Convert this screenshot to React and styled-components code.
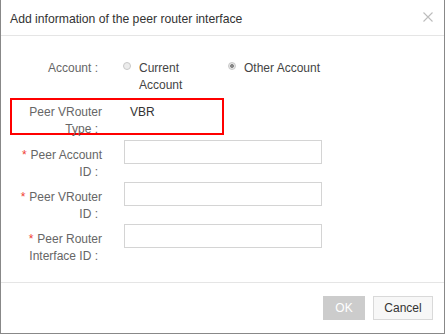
import React from "react";
import styled, { createGlobalStyle } from "styled-components";

const Global = createGlobalStyle`
  html, body { margin: 0; padding: 0; background: #fff; }
  body { font-family: "Liberation Sans", Arial, sans-serif; font-size: 12px; }
  * { box-sizing: border-box; }
`;

const Dialog = styled.div`
  width: 445px;
  height: 334px;
  border: 1px solid #888;
  border-top: none;
  display: flex;
  flex-direction: column;
  background: #fff;
`;

const Header = styled.div`
  height: 36px;
  border-bottom: 1px solid #e5e5e5;
  display: flex;
  align-items: center;
  justify-content: space-between;
  padding: 0 11px 0 9px;
`;

const Title = styled.div`
  font-size: 12.2px;
  color: #333;
  padding-top: 2px;
`;

const Close = styled.button`
  border: none;
  background: none;
  padding: 0;
  width: 10px;
  height: 10px;
  display: flex;
  margin-top: -2px;
  cursor: pointer;
`;

const Body = styled.div`
  flex: 1;
  display: flex;
  flex-direction: column;
  gap: 1px;
  padding-top: 24px;
`;

const Row = styled.div`
  display: grid;
  grid-template-columns: 88px 1fr;
  column-gap: 22px;
  align-items: start;
  padding-left: ${(p) => (p.$highlight ? 2 : 13)}px;
  ${(p) =>
    p.$highlight &&
    `
    width: 214px;
    height: 37px;
    margin: 3px 0 4px 9px;
    border: 2px solid #ff0000;
    padding-top: 4px;
  `}
`;

const Label = styled.div`
  text-align: right;
  color: #666;
  line-height: 17px;
  padding-top: ${(p) => p.$offset || 0}px;
`;

const LabelLine = styled.span`
  display: block;
  &:last-child::after {
    content: " :";
    padding-right: 4px;
  }
`;

const Required = styled.span`
  color: #f04134;
  margin-right: 4px;
`;

const RadioGroup = styled.div`
  display: flex;
  margin-left: -1px;
`;

const RadioOption = styled.label`
  display: flex;
  align-items: flex-start;
  gap: 8px;
  width: ${(p) => p.$width || "auto"};
  color: #444;
  line-height: 17px;
`;

const RadioDot = styled.span`
  flex: none;
  width: 8px;
  height: 8px;
  margin-top: 2px;
  border-radius: 50%;
  border: 1px solid #c8c8c8;
  background: ${(p) =>
    p.$checked
      ? "radial-gradient(circle, #888 0 1.6px, #e6e6e6 2.2px)"
      : "#ececec"};
`;

const RadioText = styled.span`
  max-width: ${(p) => p.$max || "none"};
`;

const Static = styled.div`
  color: #333;
  line-height: 17px;
  padding-left: 6px;
`;

const Input = styled.input`
  width: 198px;
  height: 24px;
  border: 1px solid #d4d4d4;
  background: #fff;
  outline: none;
  font: inherit;
`;

const Footer = styled.div`
  height: 51px;
  border-top: 1px solid #e5e5e5;
  display: flex;
  justify-content: flex-end;
  align-items: center;
  gap: 8px;
  padding-right: 11px;
`;

const Button = styled.button`
  height: 24px;
  width: ${(p) => p.$width}px;
  font-family: inherit;
  font-size: 12px;
  border: 1px solid ${(p) => (p.$primary ? "#ccc" : "#d9d9d9")};
  background: ${(p) => (p.$primary ? "#ccc" : "#f7f7f7")};
  color: ${(p) => (p.$primary ? "#fff" : "#333")};
  padding: 0;
  cursor: pointer;
`;

function FieldLabel({ lines, required, offset }) {
  return (
    <Label $offset={offset}>
      {lines.map((line, i) => (
        <LabelLine key={i}>
          {required && i === 0 && <Required>*</Required>}
          {line}
        </LabelLine>
      ))}
    </Label>
  );
}

const fields = [
  ["Peer Account", "ID"],
  ["Peer VRouter", "ID"],
  ["Peer Router", "Interface ID"],
];

export default function App() {
  return (
    <>
      <Global />
      <Dialog>
        <Header>
          <Title>Add information of the peer router interface</Title>
          <Close aria-label="close">
            <svg width="10" height="10" viewBox="0 0 10 10">
              <path d="M0.5 0.5L9.5 9.5M9.5 0.5L0.5 9.5" stroke="#bdbdbd" strokeWidth="1.1" />
            </svg>
          </Close>
        </Header>
        <Body>
          <Row>
            <FieldLabel lines={["Account"]} />
            <RadioGroup>
              <RadioOption $width="105px">
                <RadioDot />
                <RadioText $max="70px">Current Account</RadioText>
              </RadioOption>
              <RadioOption>
                <RadioDot $checked />
                <RadioText>Other Account</RadioText>
              </RadioOption>
            </RadioGroup>
          </Row>
          <Row $highlight>
            <FieldLabel lines={["Peer VRouter", "Type"]} />
            <Static>VBR</Static>
          </Row>
          {fields.map((lines) => (
            <Row key={lines.join(" ")}>
              <FieldLabel lines={lines} required offset={7} />
              <Input />
            </Row>
          ))}
        </Body>
        <Footer>
          <Button $primary $width={42}>OK</Button>
          <Button $width={60}>Cancel</Button>
        </Footer>
      </Dialog>
    </>
  );
}
